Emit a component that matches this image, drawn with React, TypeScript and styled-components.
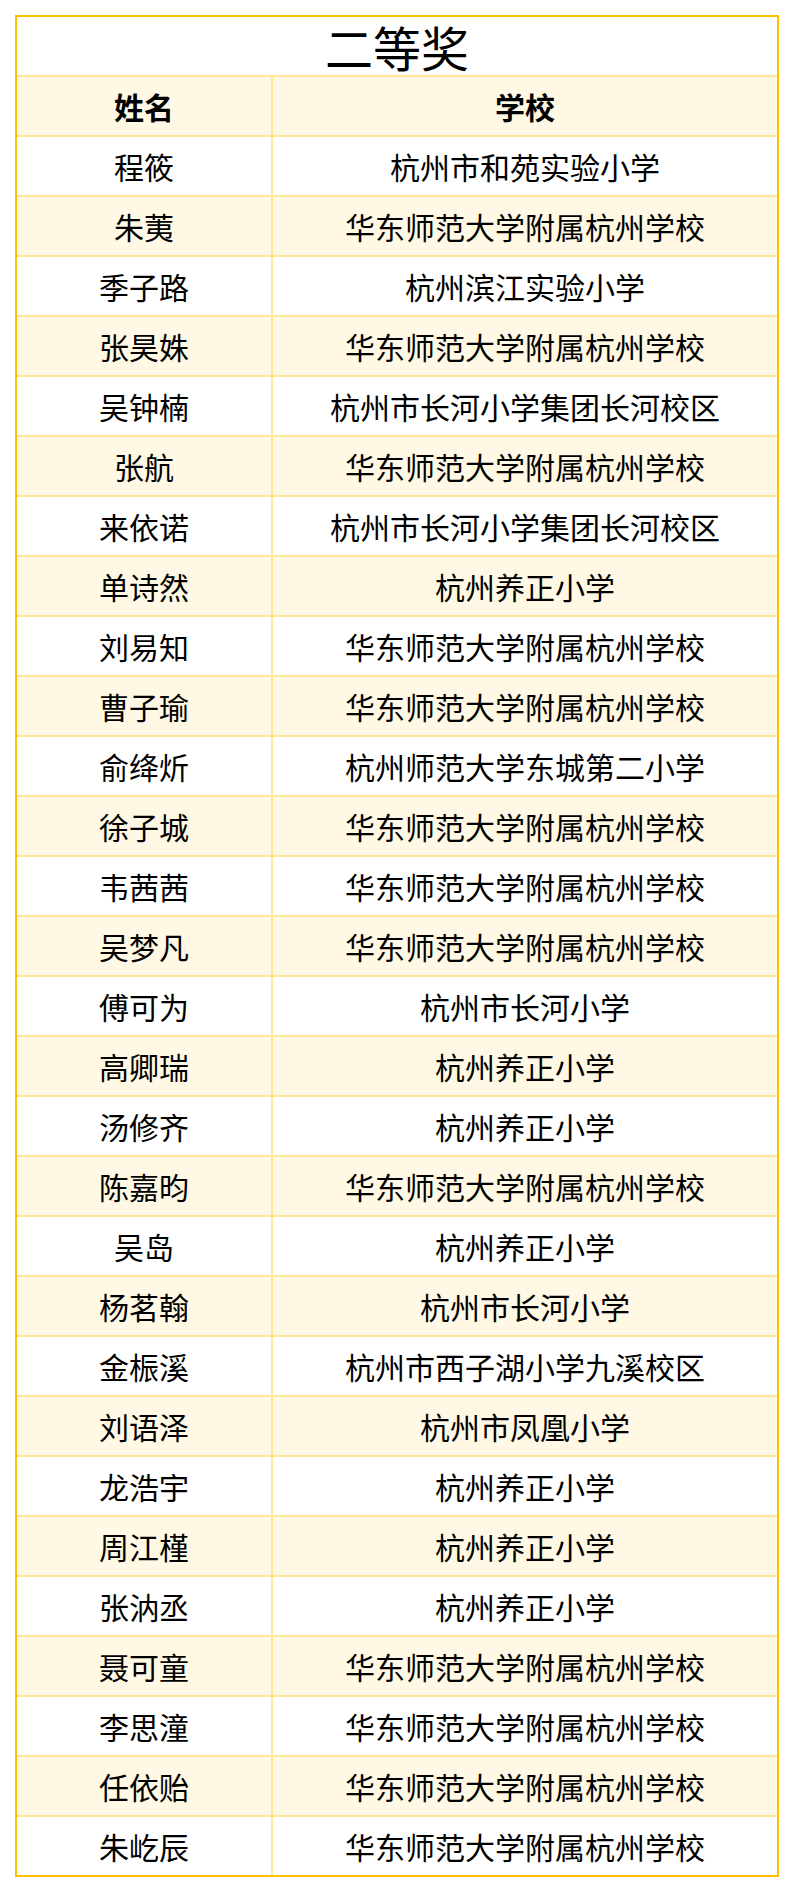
import styled, { createGlobalStyle } from "styled-components";

const rows: [string, string][] = [
  ["程筱", "杭州市和苑实验小学"],
  ["朱荑", "华东师范大学附属杭州学校"],
  ["季子路", "杭州滨江实验小学"],
  ["张昊姝", "华东师范大学附属杭州学校"],
  ["吴钟楠", "杭州市长河小学集团长河校区"],
  ["张航", "华东师范大学附属杭州学校"],
  ["来依诺", "杭州市长河小学集团长河校区"],
  ["单诗然", "杭州养正小学"],
  ["刘易知", "华东师范大学附属杭州学校"],
  ["曹子瑜", "华东师范大学附属杭州学校"],
  ["俞绛炘", "杭州师范大学东城第二小学"],
  ["徐子城", "华东师范大学附属杭州学校"],
  ["韦茜茜", "华东师范大学附属杭州学校"],
  ["吴梦凡", "华东师范大学附属杭州学校"],
  ["傅可为", "杭州市长河小学"],
  ["高卿瑞", "杭州养正小学"],
  ["汤修齐", "杭州养正小学"],
  ["陈嘉昀", "华东师范大学附属杭州学校"],
  ["吴岛", "杭州养正小学"],
  ["杨茗翰", "杭州市长河小学"],
  ["金桭溪", "杭州市西子湖小学九溪校区"],
  ["刘语泽", "杭州市凤凰小学"],
  ["龙浩宇", "杭州养正小学"],
  ["周江槿", "杭州养正小学"],
  ["张汭丞", "杭州养正小学"],
  ["聂可童", "华东师范大学附属杭州学校"],
  ["李思潼", "华东师范大学附属杭州学校"],
  ["任依贻", "华东师范大学附属杭州学校"],
  ["朱屹辰", "华东师范大学附属杭州学校"],
];

const GlobalStyle = createGlobalStyle`
  body {
    margin: 0;
    background: #fff;
    font-family: "Noto Sans CJK SC", "Noto Sans", sans-serif;
    color: #000;
  }
`;

const Page = styled.div`
  padding: 15px;
`;

const Frame = styled.div`
  border: 2px solid #ffc000;
`;

const Table = styled.table`
  width: 100%;
  border-collapse: separate;
  border-spacing: 0;
  table-layout: fixed;
`;

const TitleCell = styled.th`
  height: 58px;
  padding: 0;
  font-size: 48px;
  font-weight: 400;
  line-height: 58px;
  text-align: center;
  border-bottom: 2px solid #ffe699;
`;

const Cell = styled.td<{ $head?: boolean; $last?: boolean; $shade?: boolean; $left?: boolean }>`
  height: 58px;
  padding: 0;
  text-align: center;
  font-size: 30px;
  line-height: 58px;
  font-weight: ${(p) => (p.$head ? 700 : 400)};
  background: ${(p) => (p.$shade ? "#fff8e4" : "#fff")};
  border-bottom: ${(p) => (p.$last ? "none" : "2px solid #ffe699")};
  border-right: ${(p) => (p.$left ? "2px solid #ffe699" : "none")};
  white-space: nowrap;
`;

const App = () => {
  return (
    <Page>
      <GlobalStyle />
      <Frame>
        <Table>
          <colgroup>
            <col style={{ width: 256 }} />
            <col />
          </colgroup>
          <thead>
            <tr>
              <TitleCell colSpan={2}>二等奖</TitleCell>
            </tr>
            <tr>
              <Cell as="th" $head $shade $left>
                姓名
              </Cell>
              <Cell as="th" $head $shade>
                学校
              </Cell>
            </tr>
          </thead>
          <tbody>
            {rows.map(([name, school], i) => {
              const last = i === rows.length - 1;
              const shade = i % 2 === 1;
              return (
                <tr key={name}>
                  <Cell $left $shade={shade} $last={last}>
                    {name}
                  </Cell>
                  <Cell $shade={shade} $last={last}>
                    {school}
                  </Cell>
                </tr>
              );
            })}
          </tbody>
        </Table>
      </Frame>
    </Page>
  );
};

export default App;
